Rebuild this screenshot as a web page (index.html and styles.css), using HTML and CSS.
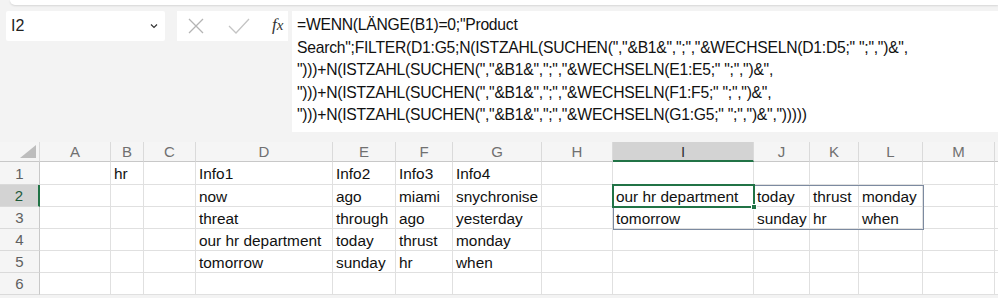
FILE: index.html
```html
<!DOCTYPE html>
<html>
<head>
<meta charset="utf-8">
<link rel="stylesheet" href="styles.css">
</head>
<body>
<div class="app">
  <div class="topbar"></div>
  <div class="fbar">
    <div class="namebox">
      <span class="nb-text">I2</span>
      <svg class="chev" width="8" height="6" viewBox="0 0 8 6"><path d="M1 1.5 L4 4.5 L7 1.5" fill="none" stroke="#333" stroke-width="1.2"/></svg>
    </div>
    <div class="btnbox">
      <svg class="ico" width="18" height="18" viewBox="0 0 18 18"><path d="M2 2 L16 16 M16 2 L2 16" stroke="#b4b4b4" stroke-width="1.3" fill="none"/></svg>
      <svg class="ico" width="22" height="18" viewBox="0 0 22 18"><path d="M1 9 L8 16 L21 2" stroke="#c4c4c4" stroke-width="1.3" fill="none"/></svg>
      <span class="fx"><i>f</i><i class="x">x</i></span>
    </div>
    <div class="formula">
      <div>=WENN(LÄNGE(B1)=0;"Product</div>
      <div>Search";FILTER(D1:G5;N(ISTZAHL(SUCHEN(","&amp;B1&amp;",";","&amp;WECHSELN(D1:D5;" ";",")&amp;",</div>
      <div>")))+N(ISTZAHL(SUCHEN(","&amp;B1&amp;",";","&amp;WECHSELN(E1:E5;" ";",")&amp;",</div>
      <div>")))+N(ISTZAHL(SUCHEN(","&amp;B1&amp;",";","&amp;WECHSELN(F1:F5;" ";",")&amp;",</div>
      <div>")))+N(ISTZAHL(SUCHEN(","&amp;B1&amp;",";","&amp;WECHSELN(G1:G5;" ";",")&amp;",")))))</div>
    </div>
  </div>
  <div class="sheet">
    <div class="grid">
      <div class="ch corner"><span class="tri"></span></div>
      <div class="ch">A</div><div class="ch">B</div><div class="ch">C</div><div class="ch">D</div>
      <div class="ch">E</div><div class="ch">F</div><div class="ch">G</div><div class="ch">H</div>
      <div class="ch sel">I</div><div class="ch">J</div><div class="ch">K</div><div class="ch">L</div>
      <div class="ch">M</div><div class="ch last"></div>

      <div class="rh">1</div>
      <div class="c"></div><div class="c">hr</div><div class="c"></div><div class="c">Info1</div>
      <div class="c">Info2</div><div class="c">Info3</div><div class="c">Info4</div><div class="c"></div>
      <div class="c"></div><div class="c"></div><div class="c"></div><div class="c"></div><div class="c"></div><div class="c last"></div>

      <div class="rh selr">2</div>
      <div class="c"></div><div class="c"></div><div class="c"></div><div class="c">now</div>
      <div class="c">ago</div><div class="c">miami</div><div class="c">snychronise</div><div class="c"></div>
      <div class="c">our hr department</div><div class="c">today</div><div class="c">thrust</div><div class="c">monday</div><div class="c"></div><div class="c last"></div>

      <div class="rh">3</div>
      <div class="c"></div><div class="c"></div><div class="c"></div><div class="c">threat</div>
      <div class="c">through</div><div class="c">ago</div><div class="c">yesterday</div><div class="c"></div>
      <div class="c">tomorrow</div><div class="c">sunday</div><div class="c">hr</div><div class="c">when</div><div class="c"></div><div class="c last"></div>

      <div class="rh">4</div>
      <div class="c"></div><div class="c"></div><div class="c"></div><div class="c">our hr department</div>
      <div class="c">today</div><div class="c">thrust</div><div class="c">monday</div><div class="c"></div>
      <div class="c"></div><div class="c"></div><div class="c"></div><div class="c"></div><div class="c"></div><div class="c last"></div>

      <div class="rh">5</div>
      <div class="c"></div><div class="c"></div><div class="c"></div><div class="c">tomorrow</div>
      <div class="c">sunday</div><div class="c">hr</div><div class="c">when</div><div class="c"></div>
      <div class="c"></div><div class="c"></div><div class="c"></div><div class="c"></div><div class="c"></div><div class="c last"></div>

      <div class="rh">6</div>
      <div class="c"></div><div class="c"></div><div class="c"></div><div class="c"></div>
      <div class="c"></div><div class="c"></div><div class="c"></div><div class="c"></div>
      <div class="c"></div><div class="c"></div><div class="c"></div><div class="c"></div><div class="c"></div><div class="c last"></div>
    </div>
    <div class="spill"></div>
    <div class="active"><span class="handle"></span></div>
  </div>
</div>
</body>
</html>
```

FILE: styles.css
```css
* { box-sizing: border-box; }
html, body { margin: 0; padding: 0; }
body {
  width: 998px;
  height: 298px;
  overflow: hidden;
  background: #f3f3f3;
  font-family: "Liberation Sans", Arial, sans-serif;
  color: #000;
}
.app { display: flex; flex-direction: column; }
.topbar {
  height: 5px;
  margin-left: 10px;
  background: #fff;
  border-bottom-left-radius: 6px;
  box-shadow: 0 1px 2px rgba(0,0,0,0.12);
}
.fbar {
  display: flex;
  align-items: flex-start;
  padding: 6px 0 0 6px;
  height: 137px;
}
.namebox {
  width: 159px;
  height: 30px;
  background: #fff;
  border-radius: 2px;
  display: flex;
  align-items: center;
  justify-content: space-between;
  padding: 0 7px 0 5px;
  font-size: 16px;
  color: #222;
}
.btnbox {
  margin-left: 12px;
  width: 111px;
  height: 30px;
  background: #fff;
  display: flex;
  align-items: center;
  padding: 0 0 0 10px;
  gap: 0;
}
.btnbox .ico:first-child { margin-right: 23px; }
.btnbox .ico:nth-child(2) { margin-right: 22px; }
.fx {
  font-family: "Liberation Serif", serif;
  font-size: 17px;
  color: #333;
  margin-top: -2px;
}
.fx .x { font-size: 15px; }
.formula {
  margin-left: 4px;
  flex: 1;
  height: 121px;
  background: #fff;
  padding: 3px 0 0 5px;
  font-size: 15.7px;
  line-height: 22.5px;
  color: #111;
  white-space: nowrap;
  letter-spacing: -0.25px;
}
.sheet {
  position: relative;
}
.grid {
  display: grid;
  grid-template-columns: 40px 71px 33px 52px 137px 63px 57px 89px 71px 141px 56px 49px 64px 72px 3px;
  grid-template-rows: 20px 23px 22px 22px 22px 22px 22px;
  background: #fff;
}
.ch {
  background: #f5f5f5;
  border-right: 1px solid #dadada;
  border-bottom: 1px solid #c8c8c8;
  font-size: 15px;
  color: #707070;
  display: flex;
  align-items: center;
  justify-content: center;
}
.ch.corner { position: relative; }
.tri {
  position: absolute;
  right: 3px;
  bottom: 3px;
  width: 0; height: 0;
  border-left: 16px solid transparent;
  border-bottom: 13px solid #bdbdbd;
}
.ch.sel {
  background: #d3d3d3;
  border-bottom: 2px solid #217346;
  color: #333;
}
.rh {
  background: #f5f5f5;
  border-right: 1px solid #c8c8c8;
  border-bottom: 1px solid #dadada;
  font-size: 15px;
  color: #606060;
  display: flex;
  align-items: center;
  justify-content: center;
}
.rh.selr {
  background: #d3d3d3;
  border-right: 2px solid #217346;
  color: #1e5a3a;
}
.c {
  border-right: 1px solid #e0e0e0;
  border-bottom: 1px solid #e0e0e0;
  font-size: 15.4px;
  padding: 2px 0 0 3px;
  white-space: nowrap;
  overflow: visible;
  line-height: 20px;
  color: #111;
}
.last { border-right: none; }
.spill {
  position: absolute;
  left: 613px;
  top: 43px;
  width: 311px;
  height: 45px;
  border: 1px solid #7c8aa0;
  pointer-events: none;
}
.active {
  position: absolute;
  left: 612px;
  top: 42px;
  width: 143px;
  height: 24px;
  border: 2px solid #217346;
}
.handle {
  position: absolute;
  right: -4px;
  bottom: -4px;
  width: 6px;
  height: 6px;
  background: #217346;
  border: 1px solid #fff;
}
```
